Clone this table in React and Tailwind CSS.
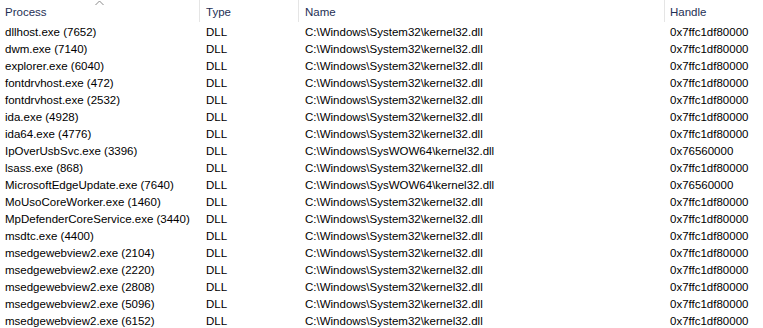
const rows = [
    ['dllhost.exe (7652)', 'C:\\Windows\\System32\\kernel32.dll', '0x7ffc1df80000'],
    ['dwm.exe (7140)', 'C:\\Windows\\System32\\kernel32.dll', '0x7ffc1df80000'],
    ['explorer.exe (6040)', 'C:\\Windows\\System32\\kernel32.dll', '0x7ffc1df80000'],
    ['fontdrvhost.exe (472)', 'C:\\Windows\\System32\\kernel32.dll', '0x7ffc1df80000'],
    ['fontdrvhost.exe (2532)', 'C:\\Windows\\System32\\kernel32.dll', '0x7ffc1df80000'],
    ['ida.exe (4928)', 'C:\\Windows\\System32\\kernel32.dll', '0x7ffc1df80000'],
    ['ida64.exe (4776)', 'C:\\Windows\\System32\\kernel32.dll', '0x7ffc1df80000'],
    ['IpOverUsbSvc.exe (3396)', 'C:\\Windows\\SysWOW64\\kernel32.dll', '0x76560000'],
    ['lsass.exe (868)', 'C:\\Windows\\System32\\kernel32.dll', '0x7ffc1df80000'],
    ['MicrosoftEdgeUpdate.exe (7640)', 'C:\\Windows\\SysWOW64\\kernel32.dll', '0x76560000'],
    ['MoUsoCoreWorker.exe (1460)', 'C:\\Windows\\System32\\kernel32.dll', '0x7ffc1df80000'],
    ['MpDefenderCoreService.exe (3440)', 'C:\\Windows\\System32\\kernel32.dll', '0x7ffc1df80000'],
    ['msdtc.exe (4400)', 'C:\\Windows\\System32\\kernel32.dll', '0x7ffc1df80000'],
    ['msedgewebview2.exe (2104)', 'C:\\Windows\\System32\\kernel32.dll', '0x7ffc1df80000'],
    ['msedgewebview2.exe (2220)', 'C:\\Windows\\System32\\kernel32.dll', '0x7ffc1df80000'],
    ['msedgewebview2.exe (2808)', 'C:\\Windows\\System32\\kernel32.dll', '0x7ffc1df80000'],
    ['msedgewebview2.exe (5096)', 'C:\\Windows\\System32\\kernel32.dll', '0x7ffc1df80000'],
    ['msedgewebview2.exe (6152)', 'C:\\Windows\\System32\\kernel32.dll', '0x7ffc1df80000'],
];

const App = () => {
    return (
        <div className="w-[763px] h-[328px] overflow-hidden bg-white text-[11.5px] font-['Liberation_Sans',Arial,sans-serif]">
            {/* header */}
            <div className="relative flex h-[24px] text-[#1e2f55]">
                <div className="w-[199px] pl-[5px] pt-[4px]">Process</div>
                <div className="w-px h-[22px] bg-[#e5e5e5]"></div>
                <div className="w-[98px] pl-[6px] pt-[4px]">Type</div>
                <div className="w-px h-[22px] bg-[#e5e5e5]"></div>
                <div className="w-[365px] pl-[6px] pt-[4px]">Name</div>
                <div className="w-px h-[22px] bg-[#e5e5e5]"></div>
                <div className="flex-1 pl-[5px] pt-[4px]">Handle</div>
                <svg className="absolute left-[95px] top-0" width="9" height="6" viewBox="0 0 9 6">
                    <path d="M0.5 5 L4.5 1 L8.5 5" fill="none" stroke="#8a8a8a" strokeWidth="1" />
                </svg>
            </div>
            {/* rows */}
            <div className="flex flex-col">
                {rows.map(([proc, name, handle], i) => (
                    <div key={i} className="flex h-[17px] items-center text-black">
                        <div className="w-[200px] pl-[5px] whitespace-nowrap">{proc}</div>
                        <div className="w-[99px] pl-[6px]">DLL</div>
                        <div className="w-[366px] pl-[6px] whitespace-nowrap">{name}</div>
                        <div className="flex-1 pl-[5px]">{handle}</div>
                    </div>
                ))}
            </div>
        </div>
    );
};

export default App;
